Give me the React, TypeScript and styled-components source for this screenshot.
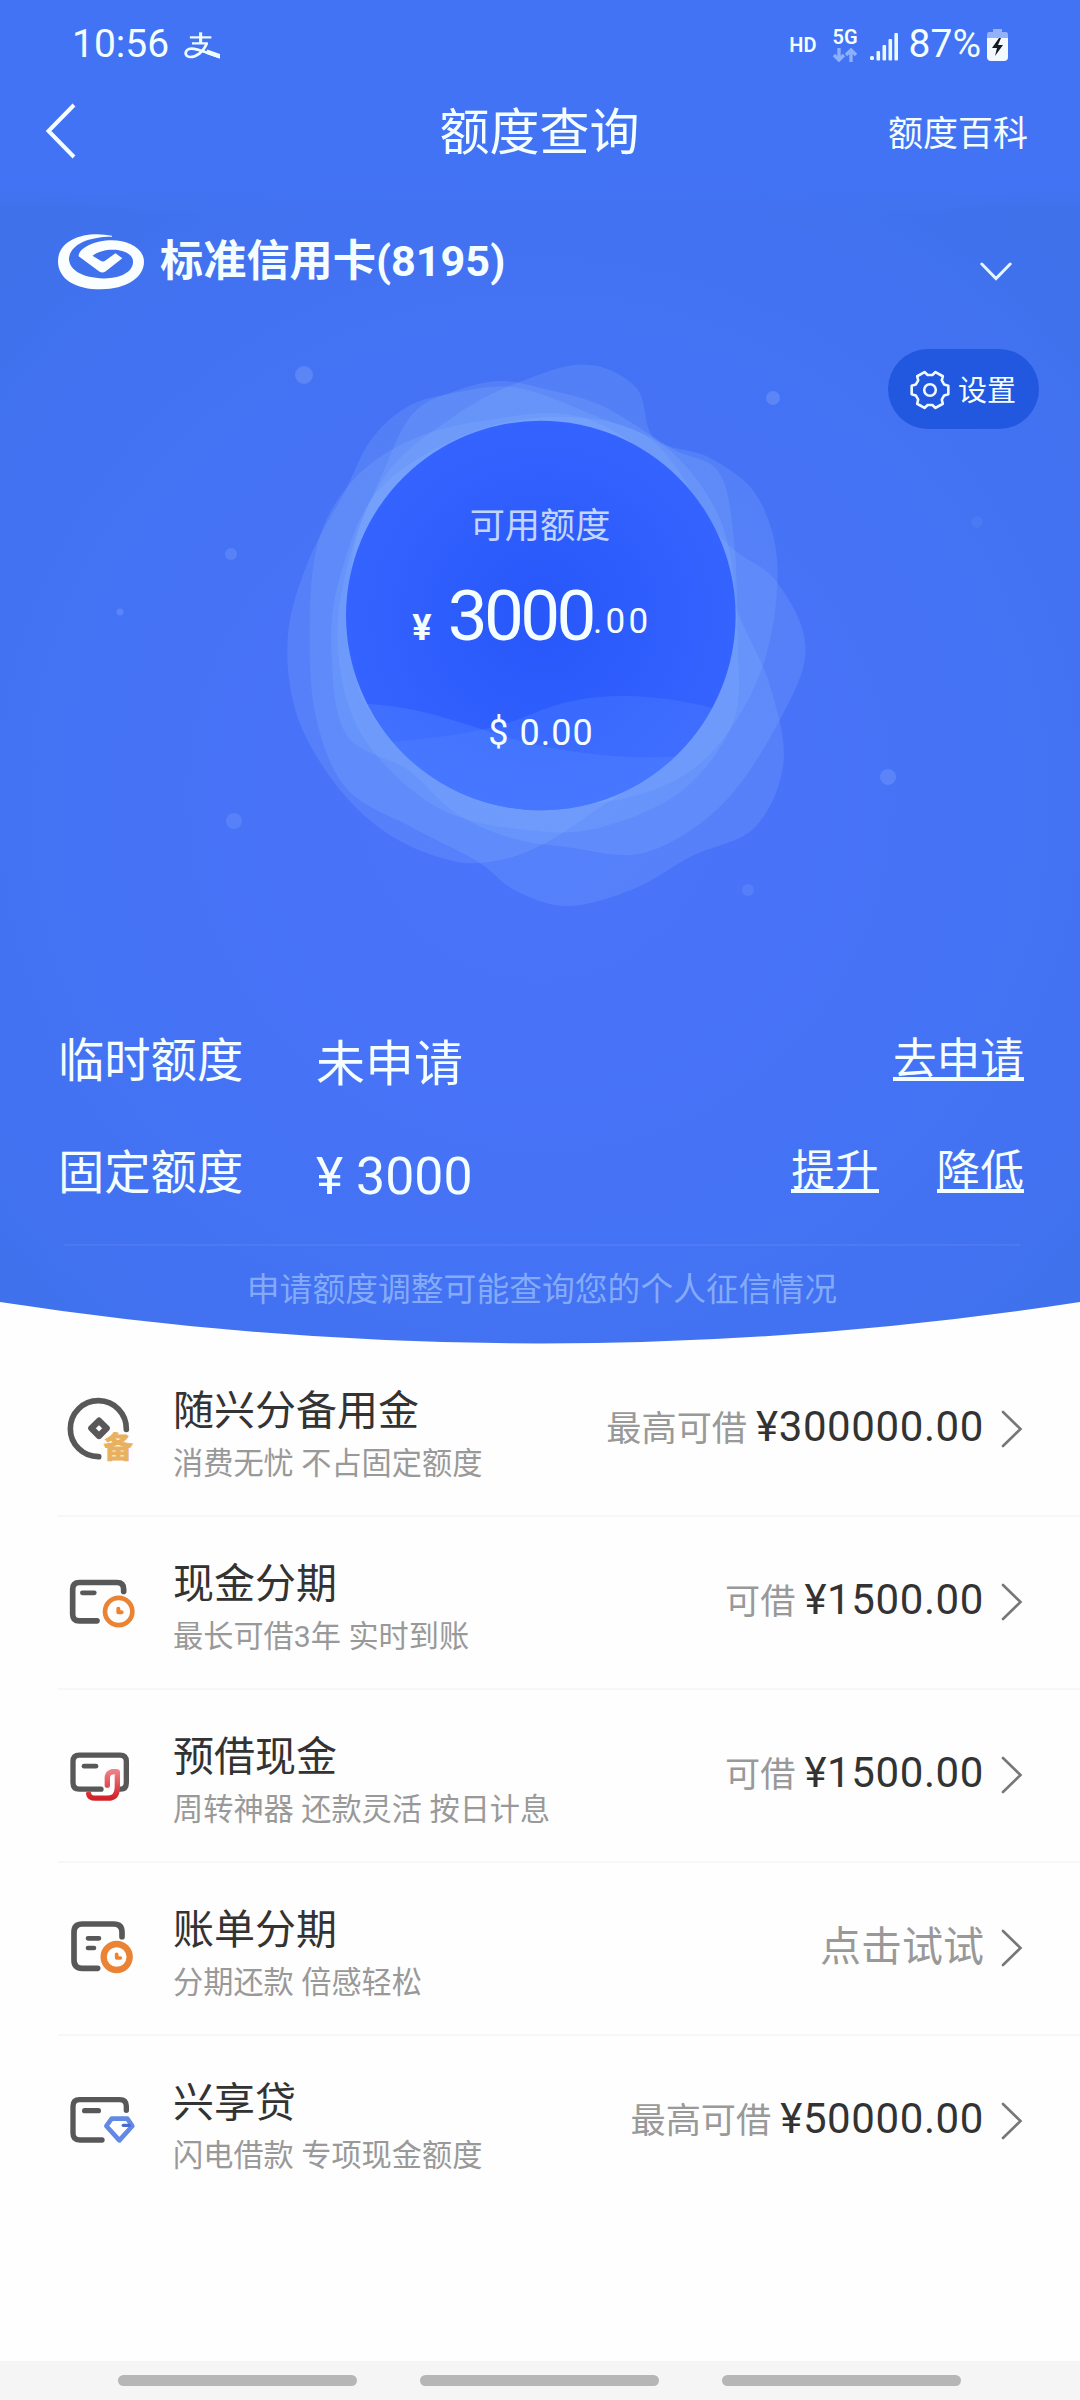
import React from "react";
import styled, { createGlobalStyle } from "styled-components";

const GlobalStyle = createGlobalStyle`
  * { box-sizing: border-box; }
  body {
    margin: 0;
    background: #fefefe;
    font-family: Roboto, "Noto Sans CJK SC", sans-serif;
  }
`;

const Screen = styled.div`
  width: 1080px;
  height: 2400px;
  display: flex;
  flex-direction: column;
  background: #fefefe;
  overflow: hidden;
`;

/* ---------- hero ---------- */

const Hero = styled.section`
  height: 1344px;
  display: grid;
  flex: none;
  color: #f4feff;
`;

const HeroArt = styled.svg`
  grid-area: 1 / 1;
  display: block;
`;

const HeroBody = styled.div`
  grid-area: 1 / 1;
  display: flex;
  flex-direction: column;
  min-width: 0;
`;

const StatusBar = styled.div`
  height: 88px;
  padding: 0 72px 0 72px;
  display: flex;
  justify-content: space-between;
`;

const StatusGroup = styled.div`
  display: flex;
  align-items: flex-start;
`;

const StatusText = styled.span<{ $ls?: number; $left?: number }>`
  font-size: 39px;
  line-height: 46px;
  margin-top: 21px;
  margin-left: ${(p) => p.$left ?? 0}px;
  letter-spacing: ${(p) => p.$ls ?? 0}px;
`;

const Tag = styled.span<{ $top: number }>`
  font-size: 20px;
  line-height: 20px;
  font-weight: 600;
  margin-top: ${(p) => p.$top}px;
`;

const NetworkType = styled.div`
  display: flex;
  flex-direction: column;
  align-items: center;
  margin: 0 12px 0 16px;
`;

const StatusIcon = styled.svg<{ $top: number; $left?: number }>`
  display: block;
  margin-top: ${(p) => p.$top}px;
  margin-left: ${(p) => p.$left ?? 0}px;
`;

const Header = styled.header`
  height: 86px;
  padding: 0 52px 0 44px;
  display: grid;
  grid-template-columns: 1fr auto 1fr;
  align-items: center;
`;

const Title = styled.h1`
  margin: 0;
  font-size: 50px;
  line-height: 60px;
  font-weight: 400;
  padding: 4px 0 0 7px;
`;

const HeaderLink = styled.span`
  justify-self: end;
  font-size: 35px;
  line-height: 44px;
  padding-top: 7px;
`;

const CardRow = styled.div`
  height: 175px;
  padding: 50px 68px 0 58px;
  display: flex;
  align-items: flex-start;
`;

const LogoSvg = styled.svg`
  margin-top: 9px;
`;

const ExpandIcon = styled.svg`
  margin-top: 38px;
`;

const CardName = styled.div`
  flex: 1;
  font-size: 43.2px;
  line-height: 60px;
  margin: 8px 0 0 16px;
  font-weight: 700;
`;

const SettingsRow = styled.div`
  height: 80px;
  padding-right: 41px;
  display: flex;
  justify-content: flex-end;
`;

const SettingsPill = styled.div`
  width: 151px;
  height: 80px;
  border-radius: 40px;
  padding: 2px 0 0 22px;
  display: flex;
  align-items: center;
  gap: 8px;
  background: #2257e0;
  font-size: 29px;
  line-height: 40px;
`;

const PillLabel = styled.span`
  padding-top: 2px;
`;

const Gauge = styled.div`
  height: 599px;
  padding-top: 72px;
  display: flex;
  flex-direction: column;
  align-items: center;
`;

const GaugeLabel = styled.div`
  font-size: 35.2px;
  line-height: 50px;
  opacity: 0.75;
`;

const Amount = styled.div`
  display: flex;
  align-items: baseline;
  height: 90px;
  line-height: 90px;
  margin-top: 20px;
  padding-right: 16px;
`;

const Yen = styled.span`
  font-size: 36px;
  font-weight: 700;
  margin-right: 16px;
`;

const Whole = styled.span`
  font-size: 71px;
  letter-spacing: -3.6px;
`;

const Cents = styled.span`
  font-size: 35px;
  letter-spacing: 3.4px;
  padding-bottom: 14px;
  align-self: flex-end;
  line-height: 50px;
`;

const Dollar = styled.div`
  font-size: 36px;
  line-height: 50px;
  letter-spacing: 1px;
  margin-top: 47px;
  padding-left: 2px;
`;

const LimitRow = styled.div`
  height: 112px;
  margin: 0 56px 0 58px;
  display: flex;
  align-items: flex-start;
`;

const LimitName = styled.span`
  width: 258px;
  font-size: 46.3px;
  line-height: 66px;
`;

const LimitValue = styled.span<{ $size: number }>`
  flex: 1;
  font-size: ${(p) => p.$size}px;
  line-height: 66px;
  padding-top: 4px;
`;

const LimitLink = styled.span`
  font-size: 43.7px;
  line-height: 50px;
  height: 47px;
  margin: 6px 0 0 58px;
  border-bottom: 4px solid #f4feff;
`;

const Notice = styled.p`
  margin: -8px 60px 0 64px;
  padding: 21px 0 0 0;
  border-top: 2px solid rgba(255, 255, 255, 0.06);
  font-size: 32.8px;
  line-height: 46px;
  text-align: center;
  color: rgba(190, 220, 255, 0.55);
`;

/* ---------- product list ---------- */

const List = styled.ul`
  margin: 0;
  padding: 0;
  list-style: none;
  flex: 1;
`;

const Row = styled.li`
  height: 173px;
  margin-left: 58px;
  padding-right: 57px;
  display: flex;
  align-items: center;
  border-bottom: 2px solid #f7f7f7;
  &:last-child { border-bottom-color: transparent; }
`;

const RowIcon = styled.svg`
  width: 90px;
  height: 90px;
  flex: none;
`;

const RowText = styled.div`
  flex: 1;
  margin: 9px 0 0 25px;
  display: flex;
  flex-direction: column;
  gap: 7px;
`;

const RowTitle = styled.div`
  font-size: 41px;
  line-height: 52px;
  color: #333;
`;

const RowSub = styled.div`
  font-size: 30.2px;
  line-height: 40px;
  color: #999;
`;

const RowHint = styled.span<{ $large?: boolean }>`
  font-size: ${(p) => (p.$large ? 41 : 35.2)}px;
  color: #999;
  margin-bottom: ${(p) => (p.$large ? 3 : 0)}px;
`;

const RowAmount = styled.span`
  font-size: 42px;
  letter-spacing: 0.6px;
  color: #333;
  margin-left: 9px;
`;

const RowValue = styled.div`
  display: flex;
  align-items: baseline;
  margin: 0 17px 9px 0;
`;

const Chevron = styled.svg`
  width: 22px;
  height: 40px;
  display: block;
  margin-bottom: 2px;
`;

/* ---------- system navigation ---------- */

const NavBar = styled.div`
  height: 39px;
  padding: 14px 2px 0 0;
  display: flex;
  justify-content: center;
  gap: 63px;
  background: #f5f5f5;
`;

const NavPill = styled.div`
  width: 239px;
  height: 11px;
  border-radius: 6px;
  background: #b6b6b6;
`;

type Pt = [number, number];

/* Smooth closed curve through the given points. */
function blob(pts: Pt[]): string {
  const n = pts.length;
  let d = `M${pts[0][0]} ${pts[0][1]}`;
  for (let i = 0; i < n; i++) {
    const a = pts[(i - 1 + n) % n];
    const b = pts[i];
    const c = pts[(i + 1) % n];
    const e = pts[(i + 2) % n];
    d += `C${b[0] + (c[0] - a[0]) / 6} ${b[1] + (c[1] - a[1]) / 6} ${c[0] - (e[0] - b[0]) / 6} ${c[1] - (e[1] - b[1]) / 6} ${c[0]} ${c[1]}`;
  }
  return d + "Z";
}

const blobs: Pt[][] = [
  [[560, 225], [720, 140], [900, 90], [1035, 150], [1084, 285], [1230, 335], [1355, 440], [1405, 640], [1350, 920], [1180, 1150], [900, 1240], [560, 1200], [320, 960], [290, 620], [380, 380]],
  [[1260, 545], [1400, 655], [1478, 830], [1410, 1020], [1260, 1240], [1060, 1365], [860, 1352], [700, 1325], [560, 1260], [440, 1150], [280, 1060], [240, 860], [260, 650], [380, 400], [700, 240], [1050, 270]],
  [[1310, 760], [1385, 930], [1420, 1130], [1345, 1300], [1180, 1375], [1030, 1460], [860, 1505], [720, 1465], [620, 1388], [450, 1300], [280, 1200], [200, 1020], [182, 800], [200, 570], [280, 410], [420, 300], [620, 240], [900, 230], [1160, 420]],
  [[720, 150], [540, 168], [430, 205], [340, 290], [275, 420], [180, 600], [125, 800], [150, 1010], [260, 1200], [400, 1325], [560, 1388], [680, 1385], [800, 1340], [940, 1248], [1130, 1110], [1280, 860], [1270, 540], [1130, 320], [930, 225]],
  [[560, 160], [680, 133], [800, 155], [950, 200], [1130, 310], [1250, 370], [1290, 540], [1300, 800], [1290, 1020], [1160, 1200], [960, 1295], [780, 1310], [520, 1250], [320, 1060], [255, 820], [290, 580], [370, 380], [450, 220]],
];

const dots: [number, number, number, number][] = [
  [304, 375, 9, 0.17],
  [773, 398, 7, 0.17],
  [231, 554, 6, 0.13],
  [120, 612, 3.5, 0.16],
  [977, 522, 6, 0.06],
  [888, 777, 8, 0.15],
  [234, 821, 8, 0.12],
  [748, 890, 6, 0.1],
];

function Art() {
  return (
    <HeroArt width="1080" height="1344" viewBox="0 0 1080 1344" aria-hidden="true">
      <defs>
        <radialGradient id="glow" gradientUnits="userSpaceOnUse" cx="540" cy="800" r="790">
          <stop offset="0" stopColor="#4a74fb" />
          <stop offset="0.35" stopColor="#4873f8" />
          <stop offset="0.72" stopColor="#4272f2" />
          <stop offset="1" stopColor="#3f71ea" />
        </radialGradient>
        <linearGradient id="topBand" x1="0" y1="0" x2="0" y2="1">
          <stop offset="0.85" stopColor="#4273f4" />
          <stop offset="1" stopColor="#4273f4" stopOpacity="0" />
        </linearGradient>
        <radialGradient id="disc">
          <stop offset="0" stopColor="#2857fa" />
          <stop offset="0.75" stopColor="#3160fe" />
          <stop offset="1" stopColor="#3563ff" />
        </radialGradient>
        <clipPath id="discClip">
          <circle cx="786" cy="746" r="509" />
        </clipPath>
      </defs>
      <path d="M0 0H1080V1302Q540 1385 0 1302Z" fill="url(#glow)" />
      <rect width="1080" height="215" fill="url(#topBand)" />
      {dots.map(([x, y, r, o]) => (
        <circle key={x} cx={x} cy={y} r={r} fill="#b8d4ff" fillOpacity={o * 1.2} />
      ))}
      <g transform="translate(240 330) scale(.3827)">
        {blobs.map((b, i) => (
          <path key={i} d={blob(b)} fill="#8fbcff" fillOpacity=".18" />
        ))}
        <circle cx="786" cy="746" r="509" fill="url(#disc)" />
        <g clipPath="url(#discClip)" fill="#5688ff">
          <path d="M270 975C520 975 620 1060 830 1095S1130 1115 1300 1105V1300H270Z" fillOpacity=".36" />
          <path d="M270 1085C420 1075 620 1065 760 1005C900 940 1080 940 1300 1005V1300H270Z" fillOpacity=".3" />
        </g>
      </g>
    </HeroArt>
  );
}

function BankLogo() {
  return (
    <LogoSvg width="86" height="57" viewBox="168 700 250 172" preserveAspectRatio="none">
      <path
        fill="#fafeff"
        d="M325 708C250 692 168 718 168 785C168 840 220 870 293 870C365 870 418 835 418 787C418 745 370 722 325 722C275 722 228 745 228 770L288 816Q297 822 306 816L355 776L335 761L306 783Q299 788 292 784L268 769C290 752 320 748 345 752C375 758 388 772 386 790C384 820 345 838 300 837C240 836 200 812 200 778C202 738 250 711 325 711Z"
      />
    </LogoSvg>
  );
}

function Gear() {
  const pts: string[] = [];
  for (let i = 0; i < 6; i++) {
    const c = (i * 60 * Math.PI) / 180;
    const at = (r: number, off: number) => {
      const t = c + (off * Math.PI) / 180;
      return `${(20 + r * Math.cos(t)).toFixed(2)} ${(20 + r * Math.sin(t)).toFixed(2)}`;
    };
    pts.push(`${at(15.2, -21)}`, `${at(18.8, -13)}`, `${at(18.8, 13)}`, `${at(15.2, 21)}`);
  }
  return (
    <svg width="40" height="40" viewBox="0 0 40 40" fill="none" stroke="#eefaff" strokeWidth="2.6" strokeLinejoin="round">
      <path d={`M${pts.join("L")}Z`} />
      <circle cx="20" cy="20" r="5.8" />
    </svg>
  );
}

const orange = "#ea8434";
const ink = "#585858";

function ProductIcon({ kind }: { kind: string }) {
  const s = { fill: "none", strokeLinecap: "round" as const, strokeLinejoin: "round" as const };
  if (kind === "coin")
    return (
      <RowIcon viewBox="54 43 270 270">
        <g {...s} stroke={ink} strokeWidth="17">
          <path d="M259 176A84 84 0 1 0 176 258" />
          <path d="M177 150L200 173L177 196L154 173Z" strokeWidth="19" />
        </g>
        <text
          x="191"
          y="261"
          fontSize="87"
          fontWeight="700"
          fill="#e9b15e"
          stroke="#e9b15e"
          strokeWidth="3"
          fontFamily="'Noto Sans CJK SC', sans-serif"
        >
          备
        </text>
      </RowIcon>
    );
  if (kind === "cardClock")
    return (
      <RowIcon viewBox="54 562.5 270 270">
        <g {...s} stroke={ink} strokeWidth="17">
          <path d="M251 663V656Q251 636 231 636H118Q98 636 98 656V731Q98 751 118 751H171" />
          <path d="M127 667H163" strokeWidth="14" />
        </g>
        <g {...s} stroke={orange}>
          <circle cx="236" cy="723" r="41" strokeWidth="14" />
          <path d="M235 715V725H245" strokeWidth="12" />
        </g>
      </RowIcon>
    );
  if (kind === "cardHand")
    return (
      <RowIcon viewBox="54 61.5 270 270">
        <defs>
          <linearGradient id="red" x1="0" y1="0" x2="0" y2="1">
            <stop offset="0" stopColor="#ee7d85" />
            <stop offset="1" stopColor="#d42127" />
          </linearGradient>
        </defs>
        <path
          d="M183 236H118Q99 236 99 217V153Q99 134 118 134H240Q259 134 259 153V217Q259 236 242 236"
          {...s}
          stroke={ink}
          strokeWidth="16"
        />
        <path d="M132 167H168" {...s} stroke={ink} strokeWidth="14" />
        <path
          d="M146 250Q148 263 166 263H204Q231 263 232 232V184Q202 180 202 202V224"
          {...s}
          stroke="url(#red)"
          strokeWidth="16"
        />
      </RowIcon>
    );
  if (kind === "billClock")
    return (
      <RowIcon viewBox="54 582 270 270">
        <g {...s} stroke={ink} strokeWidth="17">
          <path d="M246 680V667Q246 642 221 642H127Q102 642 102 667V750Q102 775 127 775H173" />
          <path d="M144 685H177M144 714H162" strokeWidth="14" />
        </g>
        <g {...s} stroke={orange}>
          <circle cx="230" cy="741" r="39" strokeWidth="19" />
          <path d="M230 733V744H241" strokeWidth="11" />
        </g>
      </RowIcon>
    );
  return (
    <RowIcon viewBox="54 1101 270 270">
      <g {...s} stroke={ink} strokeWidth="16">
        <path d="M259 1201V1189Q259 1169 239 1169H119Q99 1169 99 1189V1270Q99 1290 119 1290H186" />
        <path d="M134 1202H175" />
      </g>
      <g {...s} stroke="#6289e4" strokeWidth="14">
        <path d="M215 1226H262L277 1248L238 1291L199 1248Z" />
        <path d="M250 1246H268" stroke="#466bd0" strokeWidth="10" />
      </g>
    </RowIcon>
  );
}

const products = [
  { kind: "coin", title: "随兴分备用金", sub: "消费无忧 不占固定额度", hint: "最高可借", amount: "¥300000.00" },
  { kind: "cardClock", title: "现金分期", sub: "最长可借3年 实时到账", hint: "可借", amount: "¥1500.00" },
  { kind: "cardHand", title: "预借现金", sub: "周转神器 还款灵活 按日计息", hint: "可借", amount: "¥1500.00" },
  { kind: "billClock", title: "账单分期", sub: "分期还款 倍感轻松", hint: "点击试试", amount: "" },
  { kind: "cardGem", title: "兴享贷", sub: "闪电借款 专项现金额度", hint: "最高可借", amount: "¥50000.00" },
];

export default function App() {
  return (
    <Screen>
      <GlobalStyle />
      <Hero>
        <Art />
        <HeroBody>
          <StatusBar>
            <StatusGroup>
              <StatusText>10:56</StatusText>
              <StatusIcon $top={32} $left={15} width="36" height="28" viewBox="535 96 104 84" preserveAspectRatio="none">
                <g fill="none" stroke="#eefbff">
                  <path d="M552 112H614M558 130H604" strokeWidth="7" />
                  <path d="M583 97V130" strokeWidth="9" />
                  <path d="M601 130C590 158 570 171 553 171C534 171 536 146 556 146C575 146 600 158 640 172" strokeWidth="8" />
                  <path d="M600 155L640 169" strokeWidth="13" />
                </g>
              </StatusIcon>
            </StatusGroup>
            <StatusGroup>
              <Tag $top={35}>HD</Tag>
              <NetworkType>
                <Tag $top={27}>5G</Tag>
                <StatusIcon $top={1} width="24" height="14" viewBox="0 0 24 14">
                  <path d="M6 0V12M1 7L6 12L11 7M18 14V2M13 7L18 2L23 7" fill="none" stroke="#8cb0fb" strokeWidth="3.4" />
                </StatusIcon>
              </NetworkType>
              <StatusIcon $top={33} width="28" height="28" viewBox="0 0 28 28" fill="#e8faff">
                <rect x="0" y="23" width="4" height="4" rx="1.5" />
                <rect x="6.5" y="18" width="3.6" height="9.5" rx="1" />
                <rect x="12.5" y="12" width="3.6" height="15.5" rx="1" />
                <rect x="18.5" y="6" width="3.6" height="21.5" rx="1" />
                <rect x="24.4" y="0" width="3.6" height="27.5" rx="1" />
              </StatusIcon>
              <StatusText $left={11}>87%</StatusText>
              <StatusIcon $top={29} $left={6} width="21" height="32" viewBox="0 0 21 32">
                <path d="M6 0H15V3H19Q21 3 21 6V10H0V6Q0 3 2 3H6Z" fill="#93b2fb" />
                <path d="M0 9H21V28Q21 32 17 32H4Q0 32 0 28Z" fill="#f4f8ff" />
                <path d="M12 9L5 19H10L8 27L16 16H11L14 9Z" fill="#151a22" />
              </StatusIcon>
            </StatusGroup>
          </StatusBar>

          <Header>
            <svg width="34" height="58" viewBox="0 0 34 58" fill="none" stroke="#f4feff" strokeWidth="4">
              <path d="M30 3L4.500 29L30 55" />
            </svg>
            <Title>额度查询</Title>
            <HeaderLink>额度百科</HeaderLink>
          </Header>

          <CardRow>
            <BankLogo />
            <CardName>标准信用卡(8195)</CardName>
            <ExpandIcon width="32" height="20" viewBox="0 0 32 20" fill="none" stroke="#e6f4ff" strokeWidth="3" strokeLinecap="round">
              <path d="M1.800 2L16 16.500L30.200 2" />
            </ExpandIcon>
          </CardRow>

          <SettingsRow>
            <SettingsPill>
              <Gear />
              <PillLabel>设置</PillLabel>
            </SettingsPill>
          </SettingsRow>

          <Gauge>
            <GaugeLabel>可用额度</GaugeLabel>
            <Amount>
              <Yen>¥</Yen>
              <Whole>3000</Whole>
              <Cents>.00</Cents>
            </Amount>
            <Dollar>$ 0.00</Dollar>
          </Gauge>

          <LimitRow>
            <LimitName>临时额度</LimitName>
            <LimitValue $size={49}>未申请</LimitValue>
            <LimitLink>去申请</LimitLink>
          </LimitRow>
          <LimitRow>
            <LimitName>固定额度</LimitName>
            <LimitValue $size={51.8}>¥ 3000</LimitValue>
            <LimitLink>提升</LimitLink>
            <LimitLink>降低</LimitLink>
          </LimitRow>
          <Notice>申请额度调整可能查询您的个人征信情况</Notice>
        </HeroBody>
      </Hero>

      <List>
        {products.map((p) => (
          <Row key={p.kind}>
            <ProductIcon kind={p.kind} />
            <RowText>
              <RowTitle>{p.title}</RowTitle>
              <RowSub>{p.sub}</RowSub>
            </RowText>
            <RowValue>
              <RowHint $large={!p.amount}>{p.hint}</RowHint>
              {p.amount && <RowAmount>{p.amount}</RowAmount>}
            </RowValue>
            <Chevron viewBox="0 0 22 40" fill="none" stroke="#777" strokeWidth="2.6" strokeLinecap="round">
              <path d="M2 3L19.500 20L2 37" />
            </Chevron>
          </Row>
        ))}
      </List>

      <NavBar>
        <NavPill />
        <NavPill />
        <NavPill />
      </NavBar>
    </Screen>
  );
}
